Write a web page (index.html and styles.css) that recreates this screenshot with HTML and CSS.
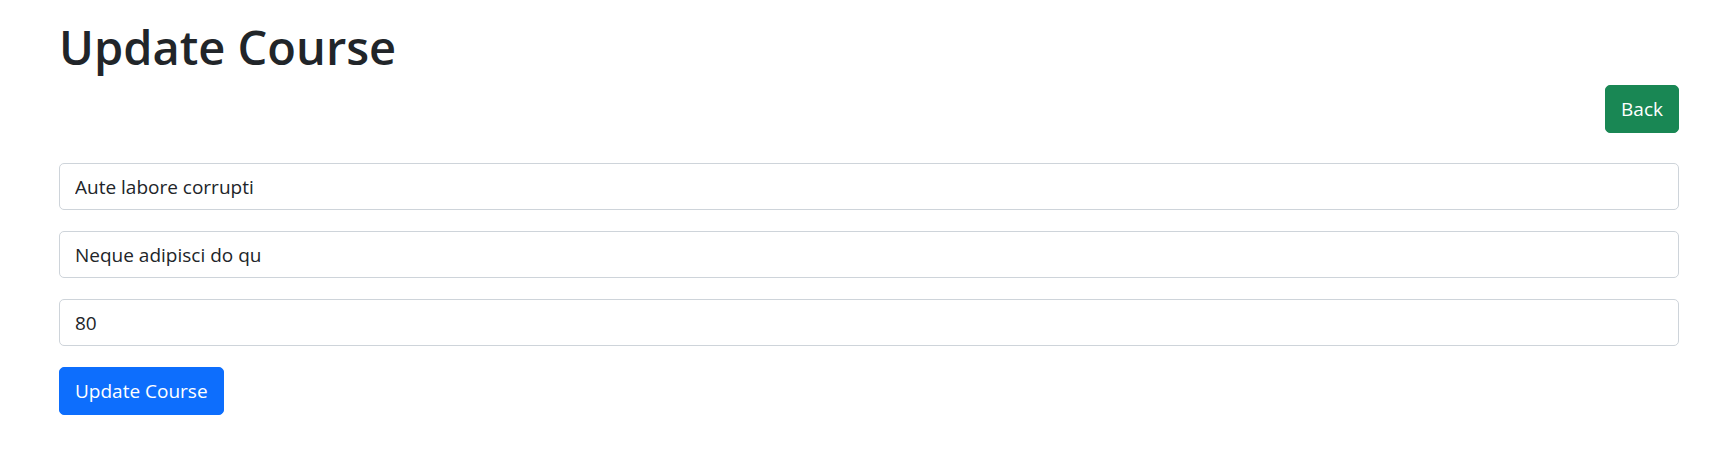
FILE: index.html
```html
<!DOCTYPE html>
<html lang="en">
<head>
<meta charset="utf-8">
<title>Update Course</title>
<link rel="stylesheet" href="styles.css">
</head>
<body>
<div class="page">
  <h1 class="title">Update Course</h1>
  <div class="toolbar">
    <a class="btn btn-success" href="#">Back</a>
  </div>
  <form class="form">
    <input class="form-control" type="text" value="Aute labore corrupti">
    <input class="form-control" type="text" value="Neque adipisci do qu">
    <input class="form-control" type="text" value="80">
    <div><button class="btn btn-primary" type="button">Update Course</button></div>
  </form>
</div>
</body>
</html>
```

FILE: styles.css
```css
html, body {
  margin: 0;
  padding: 0;
  background: #fff;
}
body {
  font-family: "Open Sans", "Noto Sans", sans-serif;
  color: #212529;
  font-size: 19px;
}
.page {
  padding: 15px 48px 0 59px;
  display: flex;
  flex-direction: column;
}
.title {
  margin: 0 0 8px 0;
  padding-top: 2px;
  font-size: 47px;
  line-height: 60px;
  font-weight: 600;
  color: #212529;
}
.toolbar {
  display: flex;
  justify-content: flex-end;
  margin-bottom: 30px;
}
.form {
  display: flex;
  flex-direction: column;
  gap: 21px;
}
.form-control {
  display: block;
  box-sizing: border-box;
  width: 100%;
  height: 47px;
  margin: 0;
  padding: 7px 15px;
  font-family: inherit;
  font-size: 19px;
  line-height: 30px;
  color: #212529;
  background: #fff;
  border: 1px solid #ced4da;
  border-radius: 5px;
  outline: none;
}
.btn {
  display: inline-block;
  box-sizing: border-box;
  height: 48px;
  padding: 8px 15px;
  font-family: inherit;
  font-size: 19px;
  line-height: 30px;
  color: #fff;
  text-decoration: none;
  border: 1px solid transparent;
  border-radius: 5px;
  cursor: pointer;
}
.btn-success {
  background: #198754;
  border-color: #198754;
}
.btn-primary {
  background: #0d6efd;
  border-color: #0d6efd;
}
```
